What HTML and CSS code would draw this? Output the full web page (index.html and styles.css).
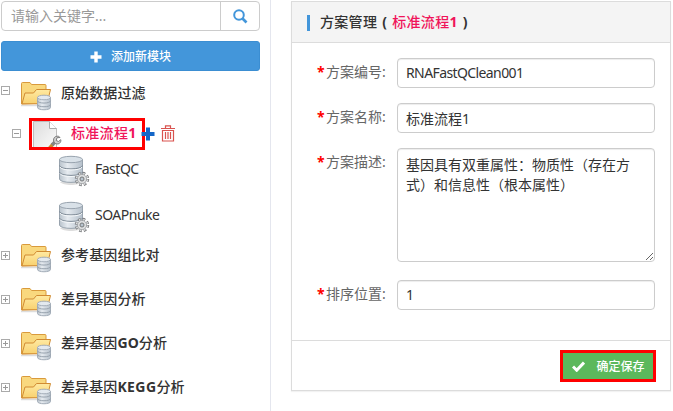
FILE: index.html
```html
<!DOCTYPE html>
<html lang="zh-CN">
<head>
<meta charset="utf-8">
<title>方案管理</title>
<link rel="stylesheet" href="styles.css">
</head>
<body>
<svg class="defs" width="0" height="0" aria-hidden="true">
  <defs>
    <linearGradient id="gold" x1="0" y1="0" x2="0" y2="1"><stop offset="0" stop-color="#ffeaa2"/><stop offset="1" stop-color="#f8d170"/></linearGradient>
    <linearGradient id="steel" x1="0" y1="0" x2="1" y2="0"><stop offset="0" stop-color="#b9c3cc"/><stop offset=".35" stop-color="#e6ebf0"/><stop offset="1" stop-color="#b4bfca"/></linearGradient>
    <linearGradient id="paper" x1="0" y1="0" x2="1" y2="1"><stop offset="0" stop-color="#dcdcdc"/><stop offset="1" stop-color="#fbfbfb"/></linearGradient>
  </defs>
  <symbol id="folder" viewBox="0 0 32 30">
    <path d="M1 24.500H17" stroke="#ddd" stroke-width="1.500"/>
    <path d="M1.500 23V2.500Q1.500 1.500 2.500 1.500H10l1.500 2H25Q26 3.500 26 4.500V22Z" fill="#f9d87e" stroke="#d99a3c"/>
    <path d="M2 22.800 5 12H13.500l3-3.500H30.500L27 22.800Z" fill="url(#gold)" stroke="#d18b32"/>
    <path d="M17.500 16.500v10c0 3 13 3 13 0v-10Z" fill="url(#steel)" stroke="#a3adb8"/>
    <ellipse cx="24" cy="16.500" rx="6.500" ry="2.300" fill="#e3e9ef" stroke="#a3adb8"/>
    <path d="M17.500 19.800c0 3 13 3 13 0M17.500 23.500c0 3 13 3 13 0" fill="none" stroke="#98a3ae"/>
  </symbol>
  <symbol id="database" viewBox="0 0 32 32">
    <path d="M2 27c3 4 19 4 22 0" fill="#ddd"/>
    <path d="M1.500 4.500V24c0 4.500 23 4.500 23 0V4.500Z" fill="url(#steel)" stroke="#98a3ae"/>
    <ellipse cx="13" cy="4.500" rx="11.500" ry="3.200" fill="#d9e1e8" stroke="#98a3ae"/>
    <path d="M1.500 10.500c0 4.500 23 4.500 23 0M1.500 17c0 4.500 23 4.500 23 0" fill="none" stroke="#7d8995"/>
    <path d="M2 12c1 4 21 4 22 0M2 18.500c1 4 21 4 22 0" fill="none" stroke="#f5f8fa"/>
    <circle cx="24" cy="24" r="5.700" fill="none" stroke="#77797b" stroke-width="3" stroke-dasharray="2.500 1.977"/>
    <circle cx="24" cy="24" r="5.400" fill="none" stroke="#dcdedf" stroke-width="2" stroke-dasharray="1.500 2.741" stroke-dashoffset="-.5"/>
    <circle cx="24" cy="24" r="4.600" fill="#dcdedf" stroke="#999b9d" stroke-width=".7"/>
    <circle cx="24" cy="24" r="2" fill="#b8c4cf" stroke="#77797b"/>
  </symbol>
  <symbol id="page" viewBox="0 0 32 32">
    <path d="M2.500 1.500H18.500L25.500 8.500V27.500H2.500Z" fill="url(#paper)" stroke="#bdbdbd"/>
    <path d="M18.500 1.500v7h7" fill="#fff" stroke="#aaa"/>
    <path d="m17 30 5-6" stroke="#c88a2f" stroke-width="3.500"/>
    <path d="m21 25 4-4" stroke="#858585" stroke-width="3.500"/>
    <path d="M29 17.500l-3 .2-.8 2.800 2.300 1 2.300-1.800c.5 3-2 5-5 4-3-1.500-3-6 0-7.200 2-.7 3.500-.2 4.200 1Z" fill="#d0d0d0" stroke="#7d7d7d"/>
  </symbol>
</svg>
<div class="app">
  <aside class="sidebar">
    <div class="search">
      <input class="search-input" type="text" placeholder="请输入关键字...">
      <button class="search-btn" aria-label="搜索">
        <svg width="16" height="16" viewBox="0 0 16 16"><circle cx="7" cy="7" r="4.800" fill="none" stroke="#4396da" stroke-width="2"/><path d="m10.500 10.500 4 4" stroke="#4396da" stroke-width="2.600"/></svg>
      </button>
    </div>
    <button class="add-btn"><svg width="12" height="12" viewBox="0 0 12 12"><path d="M6 .5v11M.5 6h11" stroke="#fff" stroke-width="3.400"/></svg><span>添加新模块</span></button>
    <div class="tree">
      <div class="node"><i class="toggle open"></i><svg class="icon"><use href="#folder"/></svg><span class="name">原始数据过滤</span></div>
      <div class="node selected">
        <i class="toggle open"></i>
        <div class="highlight"><svg class="page-icon"><use href="#page"/></svg><span>标准流程<b>1</b></span></div>
        <svg class="plus" width="14" height="14" viewBox="0 0 14 14"><path d="M7 .5v13M.5 7h13" stroke="#1467c8" stroke-width="4"/></svg>
        <svg class="trash" width="14" height="17" viewBox="0 0 14 17"><path d="M0 3.500h14M4.500 3V.8h5V3M1.500 5.500h11V16h-11ZM4.500 7v7M7 7v7M9.500 7v7" fill="none" stroke="#d9534f" stroke-width="1.200"/></svg>
      </div>
      <div class="node leaf"><svg class="db-icon"><use href="#database"/></svg><span class="name">FastQC</span></div>
      <div class="node leaf second"><svg class="db-icon"><use href="#database"/></svg><span class="name">SOAPnuke</span></div>
      <div class="node closed"><i class="toggle"></i><svg class="icon"><use href="#folder"/></svg><span class="name">参考基因组比对</span></div>
      <div class="node closed"><i class="toggle"></i><svg class="icon"><use href="#folder"/></svg><span class="name">差异基因分析</span></div>
      <div class="node closed"><i class="toggle"></i><svg class="icon"><use href="#folder"/></svg><span class="name">差异基因<b>GO</b>分析</span></div>
      <div class="node closed"><i class="toggle"></i><svg class="icon"><use href="#folder"/></svg><span class="name">差异基因<b class="wide">KEGG</b>分析</span></div>
    </div>
  </aside>
  <main class="panel">
    <header class="panel-head"><span class="bar"></span><span class="title">方案管理<b class="paren">(</b><span class="accent">标准流程<b>1</b></span><b class="paren">)</b></span></header>
    <form class="form">
      <label class="field"><span class="label"><b>*</b>方案编号:</span><input type="text" class="control code" value="RNAFastQClean001"></label>
      <label class="field"><span class="label"><b>*</b>方案名称:</span><input type="text" class="control" value="标准流程1"></label>
      <label class="field"><span class="label"><b>*</b>方案描述:</span><textarea class="control area">基因具有双重属性：物质性（存在方式）和信息性（根本属性）</textarea></label>
      <label class="field"><span class="label"><b>*</b>排序位置:</span><input type="text" class="control" value="1"></label>
    </form>
    <footer class="panel-foot">
      <button class="save-btn"><svg width="13" height="11" viewBox="0 0 13 11"><path d="m1 5.500 3.700 3.700L12 1.500" fill="none" stroke="#fff" stroke-width="3"/></svg><span>确定保存</span></button>
    </footer>
  </main>
</div>
</body>
</html>
```

FILE: styles.css
```css
* { box-sizing: border-box; }
body {
  margin: 0;
  height: 411px;
  overflow: hidden;
  background: #fff;
  color: #333;
  font: 14px/20px "Noto Sans", "Noto Sans CJK SC", sans-serif;
}
input, textarea, button { font: inherit; margin: 0; outline: 0; }
svg { flex: none; display: block; }
.defs { position: absolute; }
.app { display: flex; height: 411px; }

.sidebar {
  width: 271px;
  flex: none;
  padding: 1px 10px 0 1px;
  border-right: 1px solid #e4e6ee;
}
.search { display: flex; height: 30px; border: 1px solid #ccc; border-radius: 4px; }
.search-input {
  flex: 1;
  min-width: 0;
  padding: 0 9px;
  border: 0;
  border-radius: 4px;
  background: transparent;
}
.search-input::placeholder { color: #999; }
.search-btn {
  width: 39px;
  padding: 0;
  border: 0;
  border-left: 1px solid #ccc;
  background: transparent;
  display: flex;
  align-items: center;
  justify-content: center;
}
.add-btn {
  display: flex;
  align-items: center;
  justify-content: center;
  gap: 9px;
  width: 100%;
  height: 30px;
  margin-top: 10px;
  padding: 1px 0 0;
  border: 1px solid #3b8ed2;
  border-radius: 3px;
  background: #4396da;
  color: #fff;
  font-size: 12px;
  font-weight: 500;
}

.tree { padding-top: 10px; }
.node { display: flex; height: 30px; margin-bottom: 14px; }
.toggle {
  width: 9px;
  height: 9px;
  flex: none;
  margin: 5px 10px 0 0;
  border: 1px solid #aaa;
  background: linear-gradient(#999, #999) center / 5px 1px no-repeat,
    linear-gradient(#999, #999) center / 1px 5px no-repeat;
}
.toggle.open { background: linear-gradient(#999, #999) center / 5px 1px no-repeat; }
.icon { width: 32px; height: 30px; }
.name { margin: 2px 0 0 9px; font-weight: 500; letter-spacing: .1px; white-space: nowrap; }
.closed .toggle { margin-top: 8px; }
.wide { letter-spacing: .4px; }
.node.selected { height: 32px; margin: -7px 0 5px; padding-left: 11px; }
.selected .toggle { margin: 11px 8px 0 0; }
.highlight {
  display: flex;
  width: 116px;
  height: 32px;
  border: 3px solid #f00;
  color: #f0145a;
  font-weight: 500;
  overflow: hidden;
}
.page-icon { width: 32px; height: 32px; margin-top: -1px; margin-left: -1px; }
.highlight > span { margin: 2px 0 0 8px; letter-spacing: .3px; white-space: nowrap; }
.plus { margin: 9px 0 0 -4px; }
.trash { margin: 7px 0 0 6px; }
.leaf { height: 32px; padding-left: 57px; margin-bottom: 14px; }
.db-icon { width: 32px; height: 32px; }
.leaf .name { margin: 4px 0 0 5px; font-weight: 400; letter-spacing: -.5px; }
.leaf.second { margin-bottom: 10px; }

.panel {
  width: 380px;
  height: 390px;
  margin: 1px 0 0 20px;
  border: 1px solid #dcdcdc;
  box-shadow: 0 1px 1px rgba(0, 0, 0, .05);
}
.panel-head {
  display: flex;
  align-items: center;
  height: 41px;
  padding-left: 15px;
  border-bottom: 1px solid #dcdcdc;
  background: #f4f4f4;
}
.bar { width: 3px; height: 16px; background: #4396da; margin-top: 2px; }
.title { margin-left: 10px; font-weight: 500; letter-spacing: .3px; }
.paren { margin: 0 5px; }
.accent { color: #f0145a; }
.form {
  display: flex;
  flex-direction: column;
  gap: 15px;
  height: 297px;
  padding: 15px 15px 0 25px;
}
.form .field:last-child { margin-top: 3px; }
.field { display: flex; justify-content: space-between; }
.label { margin-top: 4px; color: #666; white-space: nowrap; }
.label b { display: inline-block; width: 9px; color: #f00; }
.control {
  width: 258px;
  height: 30px;
  padding: 0 8px 1px;
  border: 1px solid #ccc;
  border-radius: 4px;
  background: #fff;
  color: #333;
  box-shadow: inset 0 1px 1px rgba(0, 0, 0, .075);
}
.code { letter-spacing: -.6px; }
.area { display: block; height: 114px; padding: 6px 8px; resize: vertical; }
.panel-foot {
  display: flex;
  justify-content: flex-end;
  height: 50px;
  padding: 9px 14px 0 0;
  border-top: 1px solid #dcdcdc;
}
.save-btn {
  display: flex;
  align-items: center;
  justify-content: center;
  gap: 11px;
  width: 96px;
  height: 32px;
  padding: 1px 0 0 1px;
  border: 3px solid #f00;
  background: #5cb85c;
  color: #fff;
  font-size: 12px;
  font-weight: 500;
}
```
